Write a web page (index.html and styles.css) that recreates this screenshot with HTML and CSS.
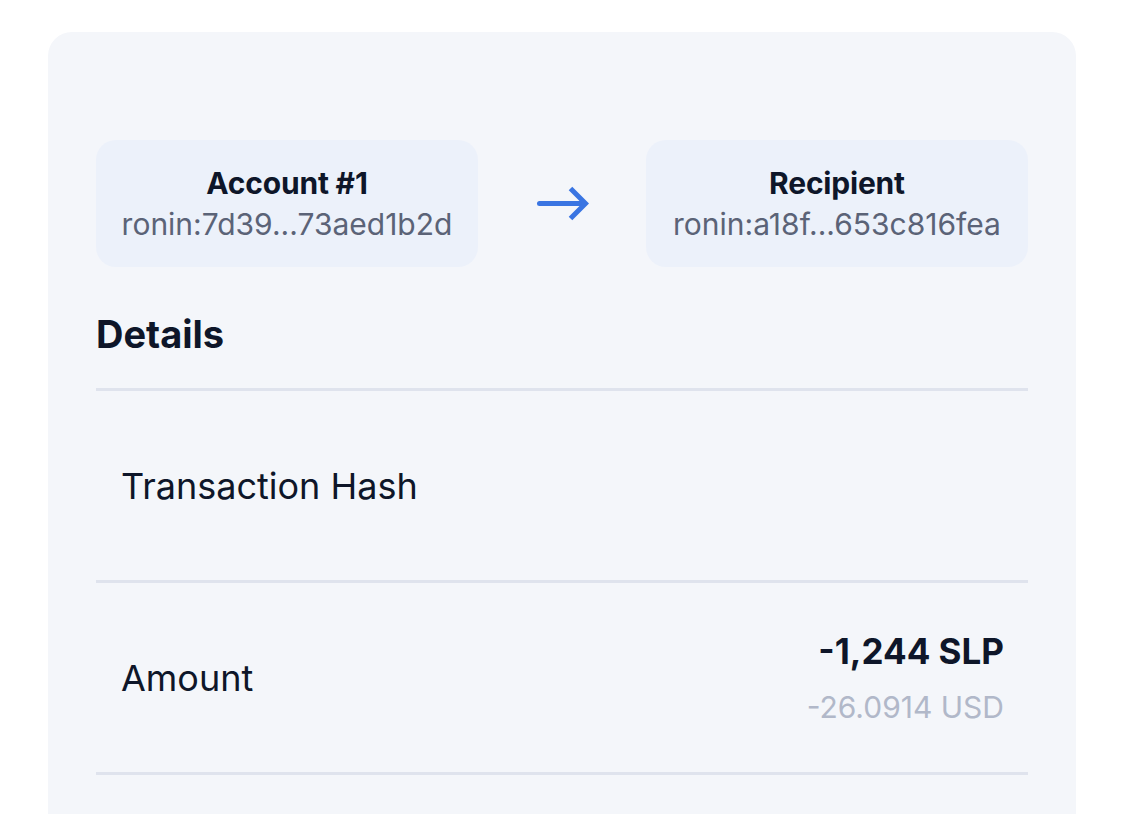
FILE: index.html
```html
<!DOCTYPE html>
<html lang="en">
<head>
<meta charset="utf-8">
<title>Transaction</title>
<link rel="stylesheet" href="styles.css">
</head>
<body>
<main class="panel">
  <section class="transfer">
    <div class="party">
      <div class="party-name">Account #1</div>
      <div class="party-addr">ronin:7d39...73aed1b2d</div>
    </div>
    <svg class="arrow" width="54" height="36" viewBox="0 0 54 36" aria-hidden="true">
      <path d="M4.5 17.5 H49" fill="none" stroke="#3a75e2" stroke-width="5" stroke-linecap="round"/>
      <path d="M35.5 2.5 L50.5 17.5 L35.5 32.5" fill="none" stroke="#3a75e2" stroke-width="5" stroke-linecap="butt" stroke-linejoin="miter"/>
    </svg>
    <div class="party">
      <div class="party-name">Recipient</div>
      <div class="party-addr">ronin:a18f...653c816fea</div>
    </div>
  </section>

  <h2 class="details-title">Details</h2>

  <div class="rows">
    <div class="row">
      <span class="row-label">Transaction Hash</span>
    </div>
    <div class="row">
      <span class="row-label">Amount</span>
      <div class="amount">
        <div class="amount-main">-1,244 SLP</div>
        <div class="amount-sub">-26.0914 USD</div>
      </div>
    </div>
  </div>
</main>
</body>
</html>
```

FILE: styles.css
```css
* { box-sizing: border-box; }

html, body {
  margin: 0;
  padding: 0;
  background: #ffffff;
  font-family: "Inter", "Noto Sans", "Liberation Sans", sans-serif;
  color: #0e1629;
}

body {
  height: 814px;
  overflow: hidden;
}

.panel {
  margin: 32px 49px 0 48px;
  width: 1028px;
  height: 782px;
  overflow: hidden;
  background: #f4f6fa;
  border-radius: 24px 24px 0 0;
  padding: 108px 48px 0 48px;
}

.transfer {
  display: flex;
  align-items: center;
  justify-content: space-between;
}

.party {
  width: 382px;
  height: 127px;
  background: #ecf1fa;
  border-radius: 20px;
  display: flex;
  flex-direction: column;
  align-items: center;
  justify-content: center;
}

.party-name {
  font-size: 30px;
  line-height: 41px;
  font-weight: 700;
  color: #0e1629;
  letter-spacing: -0.2px;
}

.party-addr {
  font-size: 30px;
  line-height: 41px;
  font-weight: 400;
  color: #5b6377;
}

.arrow {
  display: block;
}

.details-title {
  margin: 44px 0 31px 0;
  font-size: 38px;
  line-height: 46px;
  font-weight: 700;
  color: #0e1629;
}

.rows {
  border-bottom: 3px solid #dfe3ed;
}

.row {
  border-top: 3px solid #dfe3ed;
  height: 192px;
  padding: 0 24px 0 25px;
  display: flex;
  align-items: center;
  justify-content: space-between;
}

.row-label {
  font-size: 36px;
  line-height: 44px;
  color: #0e1629;
}

.amount {
  display: flex;
  flex-direction: column;
  align-items: flex-end;
  gap: 15px;
}

.amount-main {
  font-size: 35px;
  line-height: 44px;
  font-weight: 700;
  color: #0e1629;
}

.amount-sub {
  font-size: 30px;
  line-height: 38px;
  color: #b1b8c9;
}
```
